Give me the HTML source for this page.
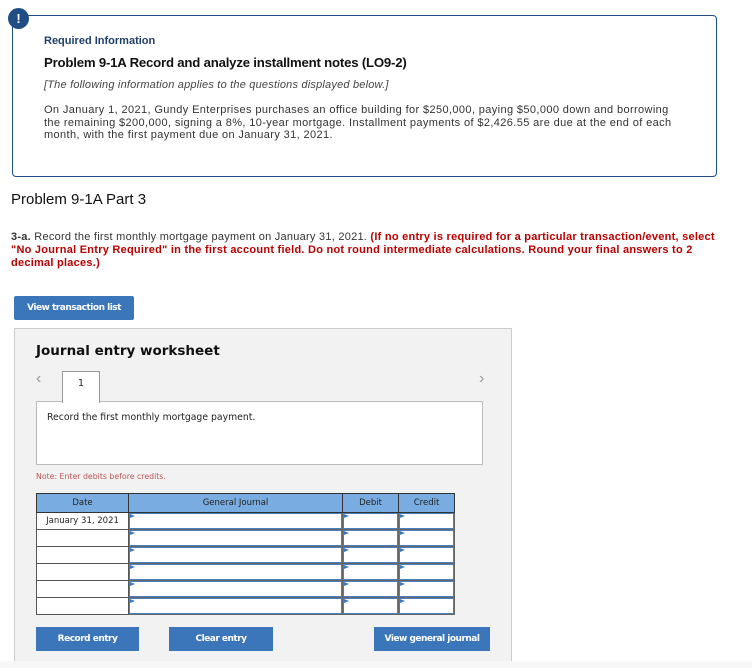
<!DOCTYPE html>
<html><head><style>
*{margin:0;padding:0;box-sizing:border-box}
body{width:752px;height:668px;background:#fff;font-family:"Liberation Sans",Arial,sans-serif;color:#222;position:relative;overflow:hidden}
.a{position:absolute;white-space:nowrap}
.v{font-family:"DejaVu Sans",Verdana,sans-serif}
.box{position:absolute;left:12px;top:15px;width:705px;height:162px;border:1px solid #1f4e85;border-radius:4px}
.bang{position:absolute;left:8px;top:8px;width:21px;height:21px;border-radius:50%;background:#1f4e85;color:#fff;font-weight:bold;font-size:13px;text-align:center;line-height:21px}
.btn{position:absolute;background:#3b76bb;color:#fff;font-weight:bold;font-size:9px;text-align:center;letter-spacing:-0.5px;font-family:"DejaVu Sans",Verdana,sans-serif}
.panel{position:absolute;left:14px;top:328px;width:498px;height:340px;background:#f2f2f2;border:1px solid #ccc}
table{position:absolute;left:36px;top:493px;border-collapse:collapse;font-size:8.5px;font-family:"DejaVu Sans",Verdana,sans-serif}
td,th{border:1px solid #555;height:17px;padding:0}
th{background:#79ace0;font-weight:normal;height:19px;border-color:#333}
td.i{background:#fff;border:1px solid #666;box-shadow:inset 0 0 0 1px #4a7fbf;position:relative}
td.i:before{content:"";position:absolute;left:1px;top:1px;border-left:5px solid #3a78c2;border-top:2.5px solid transparent;border-bottom:2.5px solid transparent}
td.d{background:#fff;text-align:center}
</style></head><body>
<div class="box"></div>
<div class="bang">!</div>
<div class="a" style="left:44px;top:35px;font-size:11px;font-weight:bold;color:#1f3e6a">Required Information</div>
<div class="a" style="left:44px;top:55px;font-size:13.2px;font-weight:bold;color:#111;letter-spacing:-0.2px">Problem 9-1A Record and analyze installment notes (LO9-2)</div>
<div class="a" style="left:44px;top:79px;font-size:11px;font-style:italic;color:#444;letter-spacing:0.2px">[The following information applies to the questions displayed below.]</div>
<div class="a" style="left:44px;top:104px;font-size:11px;line-height:12.5px;color:#333;letter-spacing:0.38px">On January 1, 2021, Gundy Enterprises purchases an office building for $250,000, paying $50,000 down and borrowing<br>the remaining $200,000, signing a 8%, 10-year mortgage. Installment payments of $2,426.55 are due at the end of each<br>month, with the first payment due on January 31, 2021.</div>
<div class="a" style="left:11px;top:191px;font-size:15px;color:#111">Problem 9-1A Part 3</div>
<div class="a" style="left:11px;top:231px;font-size:11px;line-height:13px;color:#333;letter-spacing:0.25px"><b>3-a.</b> Record the first monthly mortgage payment on January 31, 2021. <b style="color:#b00">(If no entry is required for a particular transaction/event, select<br>"No Journal Entry Required" in the first account field. Do not round intermediate calculations. Round your final answers to 2<br>decimal places.)</b></div>
<div class="btn" style="left:14px;top:296px;width:120px;height:24px;line-height:24px;border-radius:2px">View transaction list</div>
<div class="panel"></div>
<div class="a v" style="left:36px;top:343px;font-size:13.5px;font-weight:bold;color:#111">Journal entry worksheet</div>
<div class="a" style="left:36px;top:370px;font-size:16px;color:#999">&lsaquo;</div>
<div class="a" style="left:479px;top:370px;font-size:16px;color:#999">&rsaquo;</div>
<div class="a" style="left:36px;top:401px;width:447px;height:64px;background:#fff;border:1px solid #bbb"></div>
<div class="a v" style="left:62px;top:371px;width:38px;height:32px;background:#fff;border:1px solid #999;border-bottom:none;text-align:center;font-size:9.5px;padding-top:6px">1</div>
<div class="a v" style="left:47px;top:412px;font-size:9.3px;color:#222">Record the first monthly mortgage payment.</div>
<div class="a v" style="left:36px;top:472px;font-size:7.8px;color:#b55">Note: Enter debits before credits.</div>
<table>
<tr><th style="width:92px">Date</th><th style="width:214px">General Journal</th><th style="width:56px">Debit</th><th style="width:56px">Credit</th></tr>
<tr><td class="d">January 31, 2021</td><td class="i"></td><td class="i"></td><td class="i"></td></tr>
<tr><td class="d"></td><td class="i"></td><td class="i"></td><td class="i"></td></tr>
<tr><td class="d"></td><td class="i"></td><td class="i"></td><td class="i"></td></tr>
<tr><td class="d"></td><td class="i"></td><td class="i"></td><td class="i"></td></tr>
<tr><td class="d"></td><td class="i"></td><td class="i"></td><td class="i"></td></tr>
<tr><td class="d"></td><td class="i"></td><td class="i"></td><td class="i"></td></tr>
</table>
<div class="btn" style="left:36px;top:627px;width:103px;height:24px;line-height:24px">Record entry</div>
<div class="btn" style="left:169px;top:627px;width:104px;height:24px;line-height:24px">Clear entry</div>
<div class="btn" style="left:374px;top:627px;width:116px;height:24px;line-height:24px">View general journal</div>
<div class="a" style="left:0;top:661px;width:752px;height:7px;background:#f7f7f7"></div>
</body></html>
